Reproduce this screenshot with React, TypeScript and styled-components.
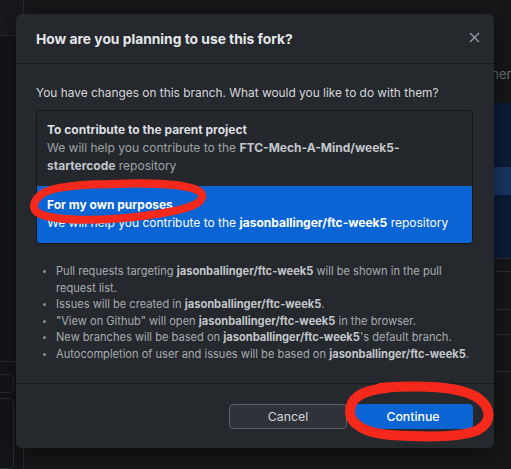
import React from 'react';
import styled, {createGlobalStyle} from 'styled-components';

const GlobalStyle = createGlobalStyle`
  html, body {
    margin: 0;
    padding: 0;
    background: #141619;
  }
  body {
    font-family: Inter, "Liberation Sans", "Noto Sans", sans-serif;
    -webkit-font-smoothing: antialiased;
  }
`;

const REPO = 'jasonballinger/ftc-week5';

type OptionProps = {
  title: string;
  selected?: boolean;
  children: React.ReactNode;
};

function ForkOption({title, selected, children}: OptionProps) {
  return (
    <OptionRow $selected={selected}>
      <OptionTitle>{title}</OptionTitle>
      <OptionDesc $selected={selected}>{children}</OptionDesc>
    </OptionRow>
  );
}

export default function App() {
  return (
    <Screen>
      <GlobalStyle />
      <Backdrop>
        <Sidebar>
          <SidebarHead />
          <SidebarBody />
          <SidebarFoot>
            <GhostBox $h={20} />
            <GhostBox $h={80} />
          </SidebarFoot>
        </Sidebar>
        <MainArea>
          <HintText>Generally safe</HintText>
          <BluePanel>
            <PreviewButton>Preview</PreviewButton>
          </BluePanel>
          <RuleRow $h={12} />
          <RuleRow $h={37} />
          <FieldStub>Open</FieldStub>
          <RuleRow $h={36} />
        </MainArea>
      </Backdrop>

      <Dialog>
        <DialogHeader>
          <DialogTitle>How are you planning to use this fork?</DialogTitle>
          <CloseButton aria-label="Close">
            <svg width="11" height="11" viewBox="0 0 11 11">
              <path d="M1 1 L10 10 M10 1 L1 10" stroke="currentColor" strokeWidth="1.3" />
            </svg>
          </CloseButton>
        </DialogHeader>

        <DialogBody>
          <Lead>You have changes on this branch. What would you like to do with them?</Lead>
          <OptionList>
            <ForkOption title="To contribute to the parent project">
              We will help you contribute to the <b>FTC-Mech-A-Mind/week5-startercode</b> repository
            </ForkOption>
            <ForkOption title="For my own purposes" selected>
              We will help you contribute to the <b>{REPO}</b> repository
            </ForkOption>
          </OptionList>
          <Bullets>
            <li>
              Pull requests targeting <b>{REPO}</b> will be shown in the pull request list.
            </li>
            <li>
              Issues will be created in <b>{REPO}</b>.
            </li>
            <li>
              "View on Github" will open <b>{REPO}</b> in the browser.
            </li>
            <li>
              New branches will be based on <b>{REPO}</b>'s default branch.
            </li>
            <li>
              Autocompletion of user and issues will be based on <b>{REPO}</b>.
            </li>
          </Bullets>
        </DialogBody>

        <DialogFooter>
          <SecondaryButton>Cancel</SecondaryButton>
          <PrimaryButton>Continue</PrimaryButton>
        </DialogFooter>
      </Dialog>

      <Markup width="511" height="469" viewBox="0 0 511 469">
        <path
          d="M110 184 C160 182 200 185 202 195 C204 205 180 211 150 215 C110 221 60 222 40 214 C30 209 33 199 45 192 C60 185 90 184 122 184"
          fill="none"
          stroke="#f4291c"
          strokeWidth="8"
          strokeLinecap="round"
        />
        <path
          d="M380 388 C420 385 460 386 478 398 C492 408 492 422 478 430 C460 438 420 437 390 435 C365 433 350 424 350 412 C350 398 362 390 387 388"
          fill="none"
          stroke="#f4291c"
          strokeWidth="10"
          strokeLinecap="round"
        />
      </Markup>
    </Screen>
  );
}

const Screen = styled.div`
  position: relative;
  width: 511px;
  height: 469px;
  overflow: hidden;
  background: #151719;
`;

const Backdrop = styled.div`
  display: grid;
  grid-template-columns: 24px 1fr;
  height: 100%;
`;

const Sidebar = styled.div`
  display: flex;
  flex-direction: column;
  border-right: 1px solid #26292d;
  background: #131518;
`;

const SidebarHead = styled.div`
  height: 35px;
  border-bottom: 1px solid #26292d;
  background: #17191c;
`;

const SidebarBody = styled.div`
  flex: 1;
`;

const SidebarFoot = styled.div`
  display: flex;
  flex-direction: column;
  gap: 5px;
  padding: 12px 10px 0 0;
  height: 95px;
  border-top: 1px solid #26292d;
  margin-right: -1px;
`;

const GhostBox = styled.div<{$h: number}>`
  height: ${(p) => p.$h}px;
  border: 1px solid #2c2f33;
  border-left: none;
  border-radius: 0 5px 5px 0;
`;

const MainArea = styled.div`
  display: flex;
  flex-direction: column;
  padding: 66px 0 0 440px;
  color: #6c7075;
  font-size: 13px;
`;

const HintText = styled.div`
  height: 37px;
  white-space: nowrap;
  padding-left: 10px;
`;

const BluePanel = styled.div`
  height: 155px;
  background: #0b1d38;
  border-bottom: 1px solid #2a2d31;
  display: flex;
  align-items: center;
`;

const PreviewButton = styled.div`
  height: 28px;
  flex: 1;
  background: #183664;
  color: #7e8a9c;
  display: flex;
  align-items: center;
  padding-left: 55px;
  white-space: nowrap;
`;

const RuleRow = styled.div<{$h: number}>`
  height: ${(p) => p.$h}px;
  border-bottom: 1px solid #2a2d31;
`;

const FieldStub = styled.div`
  height: 24px;
  border-bottom: 1px solid #2c2f33;
  display: flex;
  align-items: center;
  padding-left: 47px;
  white-space: nowrap;
`;

const Dialog = styled.div`
  position: absolute;
  left: 16px;
  top: 14px;
  width: 478px;
  height: 434px;
  display: flex;
  flex-direction: column;
  background: #25282c;
  border-radius: 6px;
  box-shadow: 0 6px 24px rgba(0, 0, 0, 0.5);
`;

const DialogHeader = styled.div`
  height: 49px;
  display: flex;
  align-items: center;
  justify-content: space-between;
  padding: 0 14px 0 20px;
  border-bottom: 1px solid #16181b;
`;

const DialogTitle = styled.h1`
  margin: 0;
  font-size: 13.8px;
  font-weight: 700;
  color: #e4e6e8;
`;

const CloseButton = styled.button`
  border: none;
  background: none;
  padding: 0;
  color: #9a9ea4;
  display: flex;
  margin-top: -2px;
`;

const DialogBody = styled.div`
  flex: 1;
  padding: 21px 21px 0 20px;
`;

const Lead = styled.p`
  margin: 0 0 9px;
  font-size: 11.9px;
  line-height: 16px;
  color: #d4d7da;
`;

const OptionList = styled.div`
  border: 1px solid #141619;
  border-radius: 4px;
  overflow: hidden;
`;

const OptionRow = styled.div<{$selected?: boolean}>`
  padding: 10px 10px 11px;
  background: ${(p) => (p.$selected ? '#0a64d3' : '#24272b')};
  color: ${(p) => (p.$selected ? '#ffffff' : '#dcdfe2')};
`;

const OptionTitle = styled.div`
  font-size: 12px;
  font-weight: 700;
  line-height: 18px;
`;

const OptionDesc = styled.div<{$selected?: boolean}>`
  font-size: 12px;
  line-height: 18px;
  color: ${(p) => (p.$selected ? '#ffffff' : '#9ea3a8')};
  b {
    color: ${(p) => (p.$selected ? '#ffffff' : '#c3c7cb')};
    font-weight: 700;
  }
`;

const Bullets = styled.ul`
  margin: 19px 0 0;
  padding: 0 0 0 20px;
  font-size: 11.1px;
  line-height: 16.6px;
  color: #a7acb1;
  li::marker {
    color: #8a8f94;
    font-size: 9px;
  }
  b {
    color: #c2c6ca;
    font-weight: 700;
  }
`;

const DialogFooter = styled.div`
  height: 65px;
  box-sizing: border-box;
  border-top: 1px solid #16181b;
  display: flex;
  justify-content: flex-end;
  align-items: center;
  gap: 6px;
  padding: 0 21px 0 20px;
`;

const BaseButton = styled.button`
  height: 25px;
  border-radius: 4px;
  font-family: inherit;
  font-size: 12.3px;
  display: flex;
  align-items: center;
  justify-content: center;
  box-sizing: border-box;
`;

const SecondaryButton = styled(BaseButton)`
  width: 118px;
  background: #2f3339;
  border: 1px solid #5b6067;
  color: #d2d5d9;
`;

const PrimaryButton = styled(BaseButton)`
  width: 120px;
  background: #0a64d3;
  border: 1px solid #0a64d3;
  color: #ffffff;
  font-weight: 500;
`;

const Markup = styled.svg`
  position: absolute;
  left: 0;
  top: 0;
  pointer-events: none;
`;
